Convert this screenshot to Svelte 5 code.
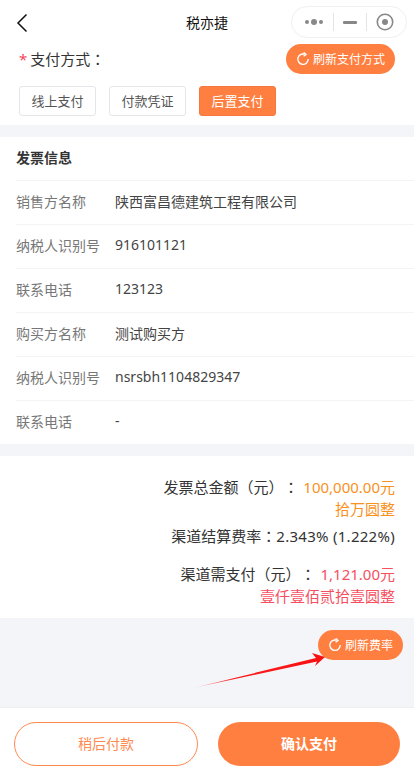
<script>
	const rows = [
		['销售方名称', '陕西富昌德建筑工程有限公司'],
		['纳税人识别号', '916101121'],
		['联系电话', '123123'],
		['购买方名称', '测试购买方'],
		['纳税人识别号', 'nsrsbh1104829347'],
		['联系电话', '-']
	];
	const methods = ['线上支付', '付款凭证', '后置支付'];
</script>

{#snippet refresh()}
	<svg class="refresh" width="14" height="14" viewBox="0 0 14 14" fill="none" stroke="#fff" stroke-width="1.4">
		<path d="M8.6 2.2A5.2 5.2 0 1 0 12.2 7" />
		<path d="M7.6 0.4 L10 2.4 L7.6 4.2" fill="none" />
	</svg>
{/snippet}

<div class="page">
	<header class="nav">
		<svg class="back" width="12" height="20" viewBox="0 0 12 20" fill="none" stroke="#111" stroke-width="1.5">
			<path d="M10.5 1.5 L2 10 L10.5 18.5" />
		</svg>
		<span class="title">税亦捷</span>
		<div class="capsule">
			<svg width="20" height="8" viewBox="0 0 20 8" fill="#888">
				<circle cx="3" cy="4" r="2" />
				<circle cx="10" cy="4" r="3" />
				<circle cx="17" cy="4" r="2" />
			</svg>
			<i></i>
			<b></b>
			<i></i>
			<svg width="18" height="18" viewBox="0 0 18 18">
				<circle cx="9" cy="9" r="7.7" fill="none" stroke="#888" stroke-width="1.6" />
				<circle cx="9" cy="9" r="3" fill="#888" />
			</svg>
		</div>
	</header>

	<section class="pay">
		<div class="pay-top">
			<div class="pay-label"><span class="star">*</span> 支付方式<span class="punc">：</span></div>
			<div class="pill">{@render refresh()}刷新支付方式</div>
		</div>
		<div class="methods">
			{#each methods as m, i}
				<div class="method" class:active={i === 2}>{m}</div>
			{/each}
		</div>
	</section>

	<section class="invoice">
		<h2>发票信息</h2>
		{#each rows as [k, v]}
			<div class="row">
				<span class="key">{k}</span>
				<span class="val">{v}</span>
			</div>
		{/each}
	</section>

	<section class="sum">
		<p>发票总金额<span class="punc">（元）：</span> <span class="orange amount">100,000.00元</span></p>
		<p class="orange">拾万圆整</p>
		<p class="rate">渠道结算费率<span class="punc">：</span><span class="pct">2.343% (1.222%)</span></p>
		<p class="need">渠道需支付<span class="punc">（元）：</span> <span class="red amount">1,121.00元</span></p>
		<p class="red">壹仟壹佰贰拾壹圆整</p>
	</section>

	<section class="gray">
		<div class="pill rate-pill">{@render refresh()}刷新费率</div>
		<svg class="arrow" width="140" height="44" viewBox="0 0 140 44">
			<defs>
				<linearGradient id="shaft" gradientUnits="userSpaceOnUse" x1="0" y1="39" x2="132" y2="8">
					<stop offset="0" stop-color="#ff1a1a" stop-opacity="0.15" />
					<stop offset="0.3" stop-color="#fb2020" />
					<stop offset="1" stop-color="#f80f0f" />
				</linearGradient>
			</defs>
			<path d="M0 39 L123 9 L119 4 L132 8 L122 17 L124 12.5 Z" fill="url(#shaft)" />
		</svg>
	</section>

	<footer class="foot">
		<div class="btn ghost">稍后付款</div>
		<div class="btn solid">确认支付</div>
	</footer>
</div>

<style>
	:global(body) {
		margin: 0;
		background: #fff;
	}

	.page {
		width: 414px;
		height: 780px;
		overflow: hidden;
		font-family: "Noto Sans", "Noto Sans CJK SC", sans-serif;
		font-size: 14px;
		color: #333;
		display: flex;
		flex-direction: column;
		text-spacing-trim: space-all;
	}

	.punc {
		font-family: "Noto Sans CJK TC", sans-serif;
	}

	.nav {
		height: 44px;
		flex: none;
		display: flex;
		align-items: center;
		justify-content: center;
		position: relative;
	}

	.back {
		position: absolute;
		left: 16px;
		top: 13px;
	}

	.title {
		font-size: 14px;
		color: #111;
	}

	.capsule {
		position: absolute;
		left: 291px;
		top: 6px;
		width: 116px;
		height: 32px;
		box-sizing: border-box;
		border: 1px solid #f0f0f0;
		border-radius: 16px;
		display: flex;
		align-items: center;
		justify-content: space-between;
		padding: 0 12px;
		background: #fff;
	}

	.capsule i {
		width: 1px;
		height: 18px;
		background: #e4e4e4;
	}

	.capsule b {
		width: 14px;
		height: 3px;
		background: #888;
		border-radius: 1px;
	}

	.pay {
		flex: none;
		height: 81px;
		padding: 0 19px;
		box-sizing: border-box;
	}

	.pay-top {
		display: flex;
		justify-content: space-between;
		align-items: center;
		height: 30px;
	}

	.pay-label {
		font-size: 15px;
		padding-bottom: 2px;
	}

	.star {
		color: #f5455c;
		margin-right: -1px;
	}

	.pill {
		height: 30px;
		border-radius: 15px;
		background: #ff7f41;
		color: #fff;
		font-size: 12px;
		display: flex;
		align-items: center;
		gap: 3px;
		padding: 0 10px;
	}

	.methods {
		display: flex;
		gap: 13px;
		margin-top: 12px;
	}

	.method {
		width: 77px;
		height: 30px;
		box-sizing: border-box;
		border: 1px solid #e4e6ea;
		border-radius: 3px;
		padding-bottom: 2px;
		display: flex;
		align-items: center;
		justify-content: center;
		font-size: 13px;
		color: #555;
	}

	.method.active {
		background: #ff7f41;
		border-color: #f5793e;
		color: #fff;
	}

	.invoice {
		flex: none;
		border-top: 12px solid #f4f5f9;
		border-bottom: 12px solid #f4f5f9;
		padding-left: 16px;
	}

	h2 {
		margin: 0;
		height: 43px;
		line-height: 41px;
		font-size: 14px;
		color: #333;
	}

	.row {
		height: 44px;
		box-sizing: border-box;
		border-top: 1px solid #f4f4f6;
		padding-bottom: 4px;
		display: flex;
		align-items: center;
	}

	.key {
		width: 99px;
		color: #777;
	}

	.val {
		color: #444;
	}

	.sum {
		flex: none;
		height: 162px;
		box-sizing: border-box;
		padding: 20px 19px 0 0;
		text-align: right;
		font-size: 15px;
	}

	.sum p {
		margin: 0;
		line-height: 22px;
	}

	.sum .rate {
		margin-top: 5px;
	}

	.sum .need {
		margin-top: 16px;
	}

	.amount {
		margin-left: 1px;
	}

	.pct {
		letter-spacing: 0.28px;
	}

	.orange {
		color: #f9911e;
	}

	.red {
		color: #f5505f;
	}

	.gray {
		flex: 1;
		background: #f4f5f9;
		position: relative;
		display: flex;
		justify-content: flex-end;
		align-items: flex-start;
		padding: 12px 11px 0 0;
		border-bottom: 1px solid #eeeeee;
	}

	.arrow {
		position: absolute;
		left: 193px;
		top: 31px;
	}

	.foot {
		flex: none;
		height: 72px;
		display: flex;
		gap: 20px;
		padding: 14px 14px 0;
		box-sizing: border-box;
	}

	.btn {
		flex: 1;
		height: 44px;
		border-radius: 22px;
		box-sizing: border-box;
		padding-bottom: 2px;
		display: flex;
		align-items: center;
		justify-content: center;
	}

	.ghost {
		border: 1px solid #ff8a50;
		color: #ff8a50;
	}

	.solid {
		background: #ff7f41;
		color: #fff;
		font-weight: 700;
	}
</style>
